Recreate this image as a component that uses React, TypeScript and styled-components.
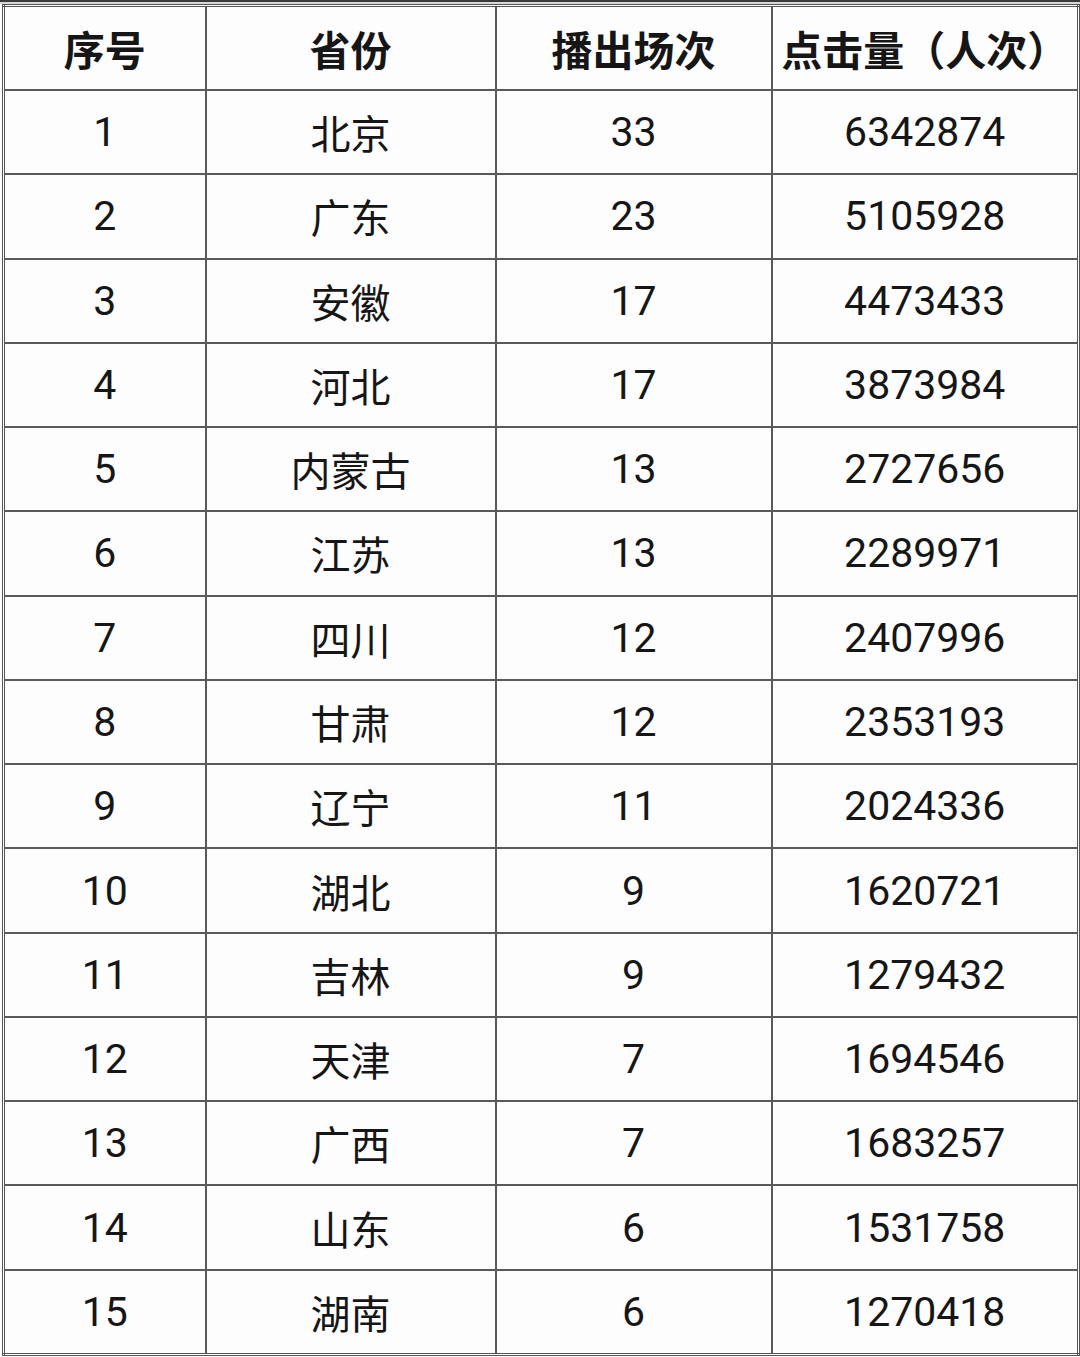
import React from 'react';
import styled, { createGlobalStyle } from 'styled-components';

const GlobalStyle = createGlobalStyle`
  html, body {
    margin: 0;
    padding: 0;
    background: #fdfdfd;
  }
  body {
    font-family: Roboto, "Noto Sans CJK SC", sans-serif;
    color: #141414;
  }
`;

const rows: [string, string, number, number][] = [
  ['1', '北京', 33, 6342874],
  ['2', '广东', 23, 5105928],
  ['3', '安徽', 17, 4473433],
  ['4', '河北', 17, 3873984],
  ['5', '内蒙古', 13, 2727656],
  ['6', '江苏', 13, 2289971],
  ['7', '四川', 12, 2407996],
  ['8', '甘肃', 12, 2353193],
  ['9', '辽宁', 11, 2024336],
  ['10', '湖北', 9, 1620721],
  ['11', '吉林', 9, 1279432],
  ['12', '天津', 7, 1694546],
  ['13', '广西', 7, 1683257],
  ['14', '山东', 6, 1531758],
  ['15', '湖南', 6, 1270418],
];

const Page = styled.div`
  width: 1080px;
  height: 1357px;
  overflow: hidden;
  background: #fdfdfd;
`;

const TopEdge = styled.div`
  height: 4px;
  border-top: 2px solid #3a3a3a;
  background: #d8d8d8;
  box-sizing: border-box;
`;

const Table = styled.table`
  margin-left: 2px;
  width: 1075px;
  table-layout: fixed;
  border-collapse: collapse;
  border: 3px double #555;
`;

const Cell = styled.td<{ $head?: boolean }>`
  border: 2px solid #5a5a5a;
  height: ${({ $head }) => ($head ? '82px' : '82.27px')};
  padding: 0;
  text-align: center;
  vertical-align: middle;
  font-size: ${({ $head }) => ($head ? '41px' : '41px')};
  font-weight: ${({ $head }) => ($head ? 700 : 400)};
  font-family: ${({ $head }) =>
    $head ? '"Noto Sans CJK SC", sans-serif' : 'Roboto, "Noto Sans CJK SC", sans-serif'};
  white-space: nowrap;
  color: #161616;
`;

const Name = styled.span`
  font-family: "Noto Sans CJK SC", sans-serif;
  font-size: 40px;
`;

export default function App() {
  return (
    <Page>
      <GlobalStyle />
      <TopEdge />
      <Table>
        <colgroup>
          <col style={{ width: 202 }} />
          <col style={{ width: 290 }} />
          <col style={{ width: 276 }} />
          <col style={{ width: 307 }} />
        </colgroup>
        <thead>
          <tr>
            <Cell as="th" $head>序号</Cell>
            <Cell as="th" $head>省份</Cell>
            <Cell as="th" $head>播出场次</Cell>
            <Cell as="th" $head>点击量（人次）</Cell>
          </tr>
        </thead>
        <tbody>
          {rows.map(([no, prov, shows, clicks]) => (
            <tr key={no}>
              <Cell>{no}</Cell>
              <Cell><Name>{prov}</Name></Cell>
              <Cell>{shows}</Cell>
              <Cell>{clicks}</Cell>
            </tr>
          ))}
        </tbody>
      </Table>
    </Page>
  );
}
